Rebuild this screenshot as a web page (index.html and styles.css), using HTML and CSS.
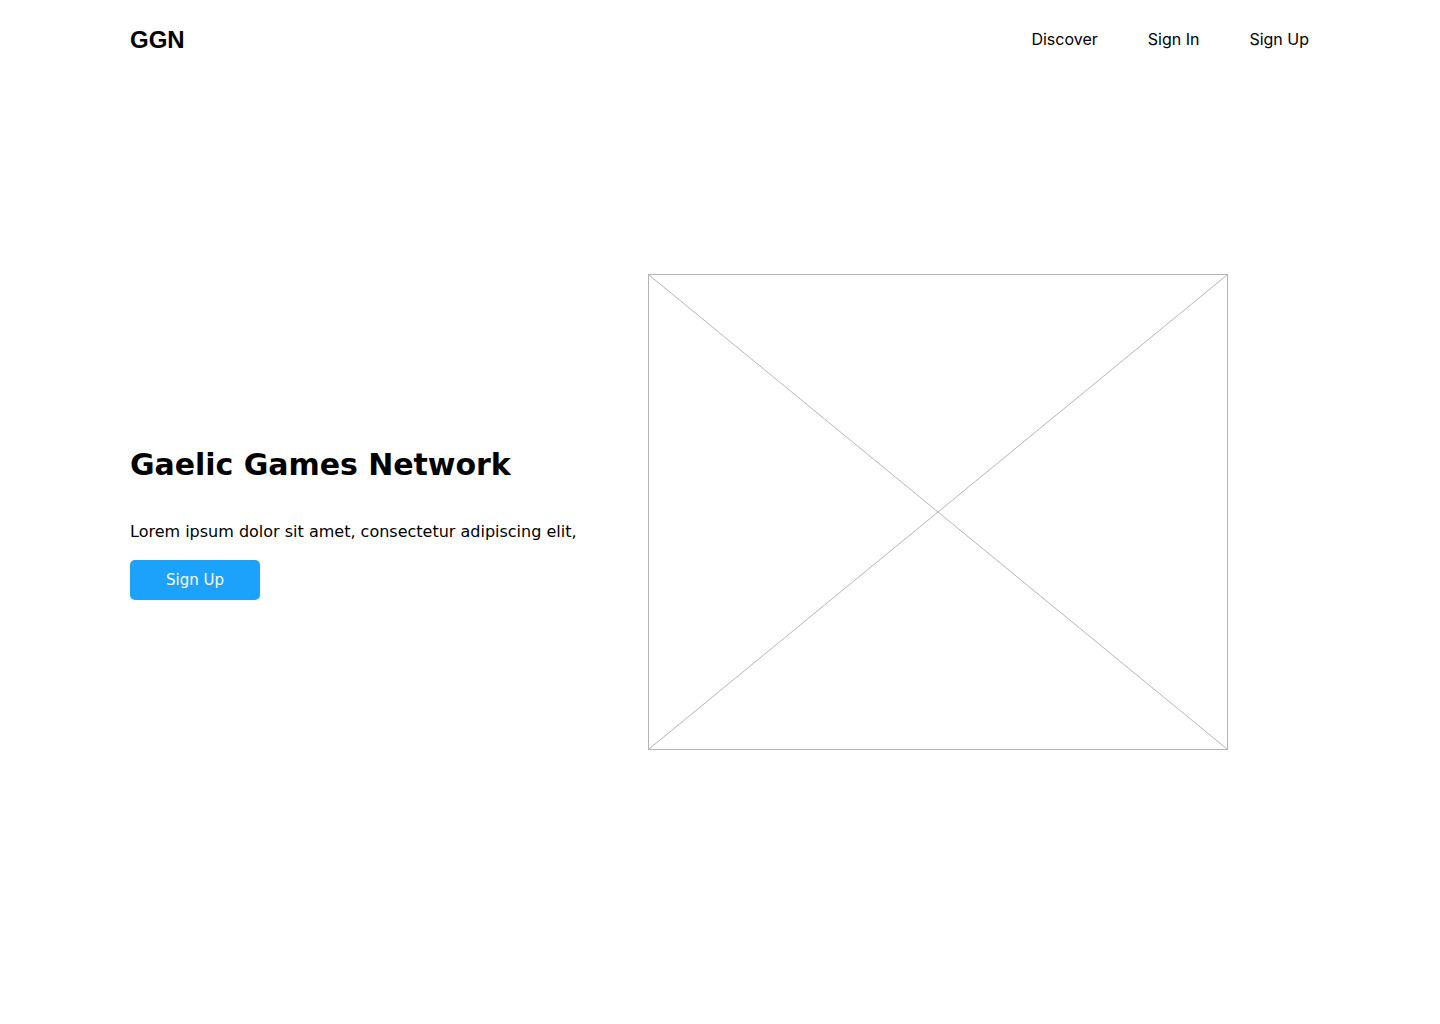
FILE: index.html
```html
<!DOCTYPE html>
<html lang="en">
<head>
<meta charset="utf-8">
<title>GGN</title>
<link rel="stylesheet" href="styles.css">
</head>
<body>
<header class="header">
  <div class="logo">GGN</div>
  <nav class="nav">
    <a class="nav-link" href="#">Discover</a>
    <a class="nav-link" href="#">Sign In</a>
    <a class="nav-link" href="#">Sign Up</a>
  </nav>
</header>
<main class="hero">
  <div class="hero-text">
    <h1 class="hero-title">Gaelic Games Network</h1>
    <p class="hero-sub">Lorem ipsum dolor sit amet, consectetur adipiscing elit,</p>
    <a class="btn" href="#">Sign Up</a>
  </div>
  <div class="placeholder">
    <svg class="placeholder-x" viewBox="0 0 580 476" preserveAspectRatio="none">
      <line x1="0" y1="0" x2="580" y2="476" stroke="#b5b5b5" stroke-width="1"/>
      <line x1="580" y1="0" x2="0" y2="476" stroke="#b5b5b5" stroke-width="1"/>
    </svg>
  </div>
</main>
</body>
</html>
```
FILE: styles.css
```css
* { box-sizing: border-box; }
html, body { margin: 0; padding: 0; background: #fff; }
body { font-family: "Inter", "Liberation Sans", sans-serif; color: #000; }

.header {
  height: 78px;
  padding: 0 131px 0 130px;
  display: flex;
  align-items: center;
  justify-content: space-between;
}
.logo {
  font-family: "Liberation Sans", Arial, sans-serif;
  font-weight: 700;
  font-size: 24px;
  padding-top: 2px;
}
.nav { display: flex; gap: 50px; }
.nav-link {
  font-family: "Inter", sans-serif;
  font-size: 16px;
  color: #000;
  text-decoration: none;
}

.hero {
  display: flex;
  align-items: flex-start;
  padding: 196px 0 0 130px;
}
.hero-text {
  width: 518px;
  padding-top: 171px;
}
.hero-title {
  margin: 0;
  font-family: "DejaVu Sans", sans-serif;
  font-weight: 700;
  font-size: 30px;
  line-height: 40px;
  letter-spacing: -0.05px;
}
.hero-sub {
  margin: 35px 0 0;
  font-family: "DejaVu Sans", sans-serif;
  font-size: 16px;
  line-height: 24px;
}
.btn {
  display: flex;
  align-items: center;
  justify-content: center;
  margin-top: 16px;
  width: 130px;
  height: 40px;
  background: #1ca2fa;
  border-radius: 5px;
  color: #fff;
  font-family: "DejaVu Sans", sans-serif;
  font-size: 15px;
  text-decoration: none;
}
.placeholder {
  width: 580px;
  height: 476px;
  border: 1px solid #b5b5b5;
  position: relative;
}
.placeholder-x {
  position: absolute;
  inset: 0;
  width: 100%;
  height: 100%;
  display: block;
}
```
